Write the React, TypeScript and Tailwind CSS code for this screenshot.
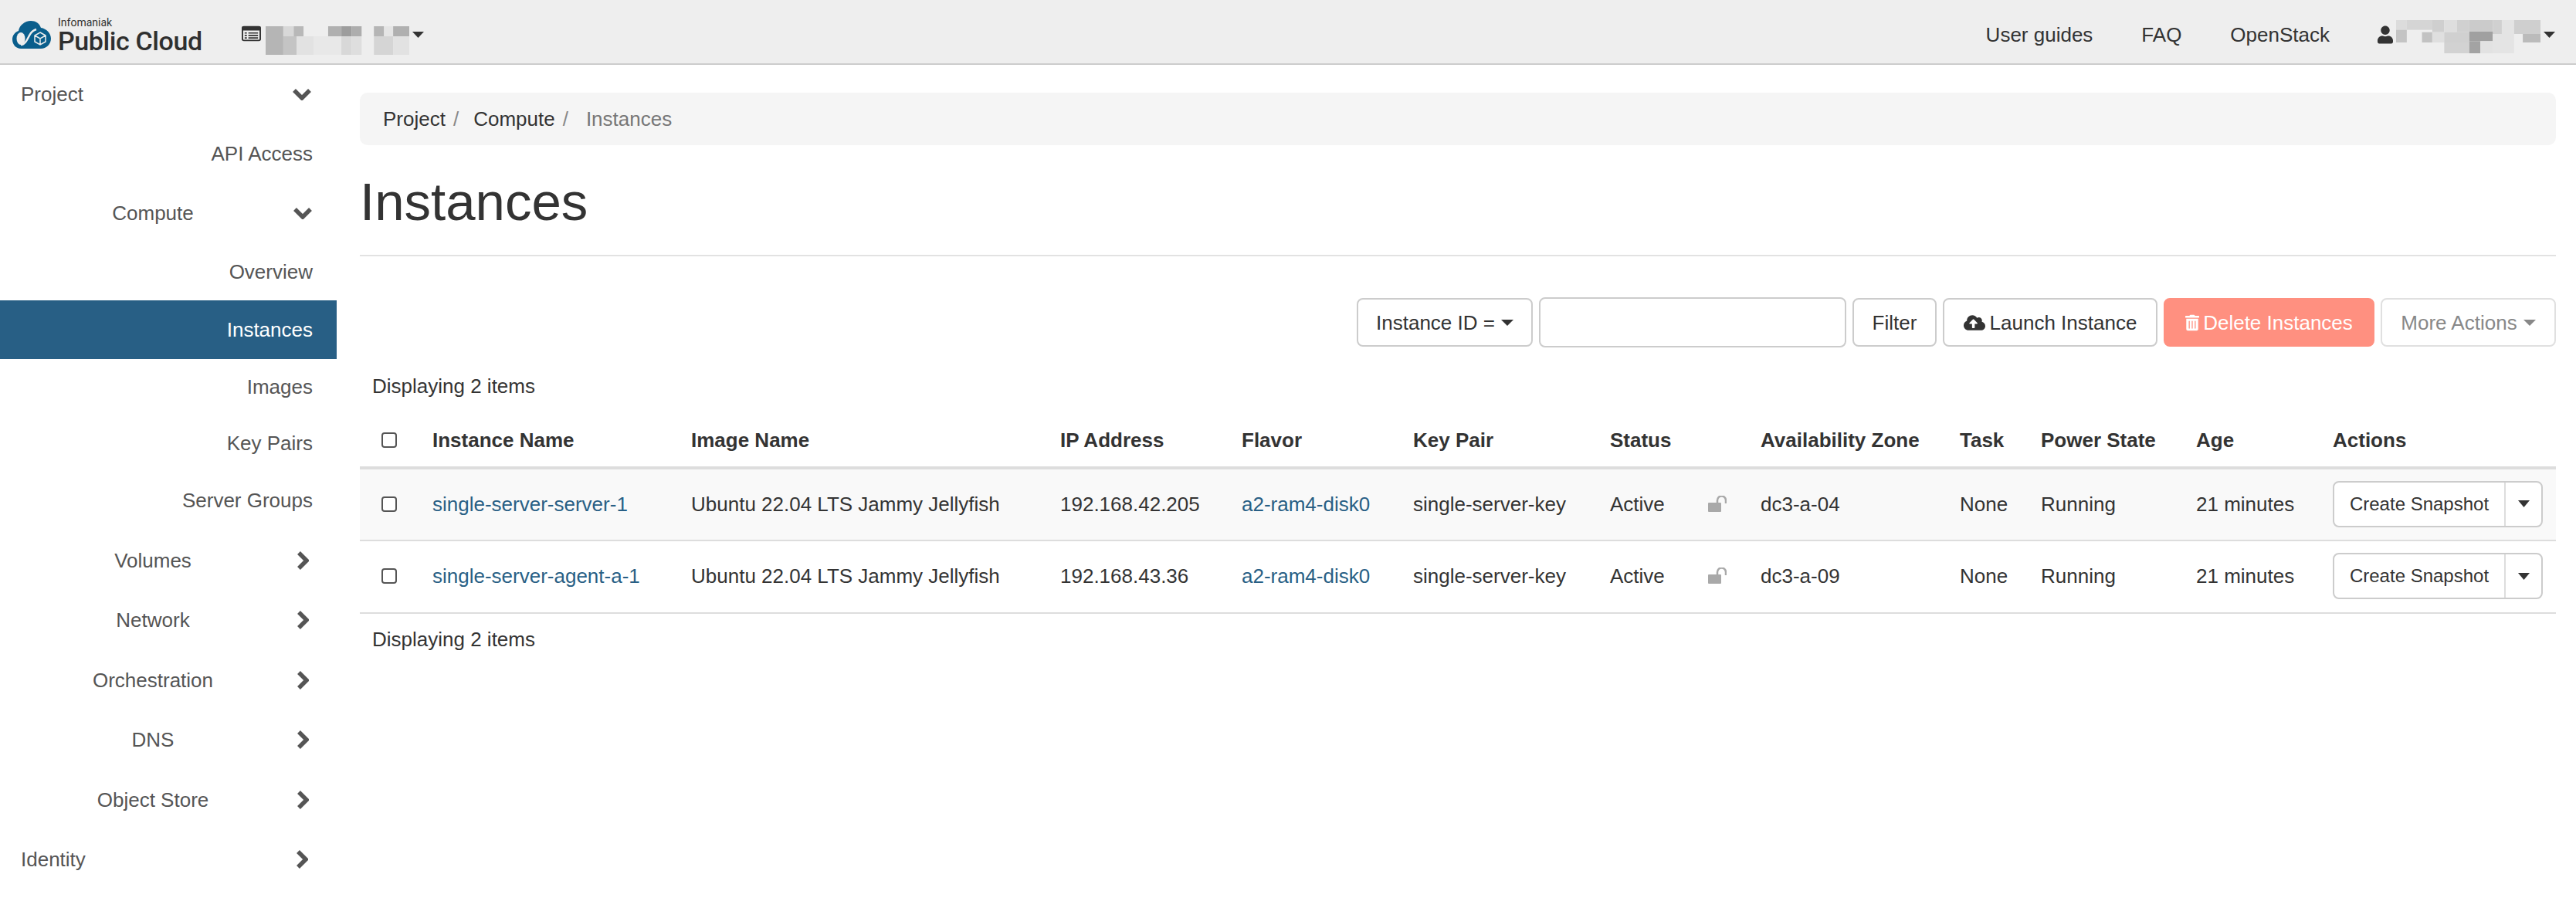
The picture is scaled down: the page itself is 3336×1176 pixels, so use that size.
import React from "react";
import { FaCloudUploadAlt, FaTrashAlt, FaUser } from "react-icons/fa";

const headerMosaic: [number, number, number, number, string][] = [
  [843, 102, 56, 39, "#b5b5b5"], [899, 102, 33, 39, "#d8d8d8"], [932, 102, 31, 39, "#b8b8b8"],
  [1041, 102, 42, 39, "#b0b0b0"], [1083, 102, 32, 39, "#9d9d9d"], [1115, 102, 32, 39, "#adadad"],
  [1186, 102, 32, 39, "#b5b5b5"], [1218, 102, 29, 39, "#e5e5e5"], [1247, 102, 51, 39, "#b0b0b0"],
  [843, 141, 56, 72, "#b5b5b5"], [899, 141, 42, 72, "#c4c4c4"], [941, 141, 54, 72, "#e2e2e2"],
  [995, 141, 88, 72, "#e8e8e8"], [1083, 141, 32, 72, "#d8d8d8"], [1115, 141, 32, 72, "#dedede"],
  [1186, 141, 61, 72, "#d5d5d5"], [1247, 141, 51, 72, "#e2e2e2"],
];

const userMosaic: [number, number, number, number, string][] = [
  [1127, 78, 26, 38, "#dcdcdc"], [1153, 78, 62, 38, "#d5d5d5"], [1215, 78, 29, 47, "#cfcfcf"],
  [1244, 78, 31, 47, "#dedede"], [1275, 78, 30, 47, "#d0d0d0"], [1305, 78, 57, 45, "#cbcbcb"],
  [1362, 78, 22, 54, "#d0d0d0"], [1384, 78, 30, 54, "#e4e4e4"], [1414, 78, 64, 54, "#cfcfcf"],
  [1127, 116, 26, 49, "#c4c4c4"], [1190, 125, 25, 40, "#c2c2c2"], [1215, 125, 29, 40, "#dfdfdf"],
  [1244, 125, 61, 40, "#d0d0d0"], [1305, 123, 57, 37, "#a0a0a0"], [1362, 132, 52, 33, "#e4e4e4"],
  [1435, 132, 43, 33, "#bbbbbb"], [1244, 165, 61, 42, "#d2d2d2"], [1305, 160, 27, 47, "#a3a3a3"],
  [1332, 160, 30, 47, "#e2e2e2"], [1362, 165, 52, 42, "#e4e4e4"],
];

function Mosaic({ viewBox, rects, className }: { viewBox: string; rects: [number, number, number, number, string][]; className: string }) {
  return (
    <svg viewBox={viewBox} preserveAspectRatio="none" className={className}>
      {rects.map(([x, y, w, h, fill], i) => (
        <rect key={i} x={x} y={y} width={w} height={h} fill={fill} />
      ))}
    </svg>
  );
}

function Caret({ className = "" }: { className?: string }) {
  return (
    <svg viewBox="0 0 14 8" preserveAspectRatio="none" className={`shrink-0 fill-current ${className}`}>
      <path d="M0 0H14L7 8Z" />
    </svg>
  );
}

function ChevronDown() {
  return (
    <svg viewBox="0 0 24 16" className="w-6 h-4 shrink-0 ml-1 text-[#555]" fill="none" stroke="currentColor" strokeWidth="5.500">
      <path d="M2 3L12 13L22 3" />
    </svg>
  );
}

function ChevronRight() {
  return (
    <span className="w-6 ml-1 flex justify-center shrink-0">
      <svg viewBox="0 0 16 24" className="w-4 h-6 text-[#555]" fill="none" stroke="currentColor" strokeWidth="5.500">
        <path d="M3 2L13 12L3 22" />
      </svg>
    </span>
  );
}

function Checkbox() {
  return <span className="block w-5 h-5 border-2 border-[#555] rounded-[4px] bg-white" />;
}

function UnlockIcon() {
  return (
    <svg viewBox="0 0 24 22" className="w-6 h-[22px] text-[#a9a9a9]" fill="currentColor">
      <rect x="0" y="9" width="17" height="12" rx="1" />
      <path d="M12 9V6a5.500 5.500 0 0 1 11 0v4" fill="none" stroke="currentColor" strokeWidth="2.500" />
    </svg>
  );
}

function LogoCloud() {
  return (
    <svg viewBox="0 0 50 36" className="w-[50px] h-9 shrink-0">
      <path d="M11 36C5 36 0 31 0 24c0-5 3-9 8-11C9 6 16 0 24 0c6 0 11 3 13 9 7 1 13 7 13 14 0 7-6 13-13 13Z" fill="#0a5e8c" />
      <ellipse cx="11" cy="23" rx="5.500" ry="8" fill="#eeeeee" />
      <path d="M11 31c5 0 8-6 11-12 2-4 5-7 9-8" fill="none" stroke="#eeeeee" strokeWidth="2.500" />
      <path d="M36 15l7 4v8l-7 4-7-4v-8ZM29 19l7 4 7-4M36 23v8" fill="none" stroke="#eeeeee" strokeWidth="1.500" />
    </svg>
  );
}

function TopLevel({ label, open, className = "h-[77.5px]" }: { label: string; open?: boolean; className?: string }) {
  return (
    <div className={`flex items-center pl-[27px] pr-[33px] justify-between ${className}`}>
      <span>{label}</span>
      {open ? <ChevronDown /> : <ChevronRight />}
    </div>
  );
}

function Group({ label, open, className = "h-[77.5px]" }: { label: string; open?: boolean; className?: string }) {
  return (
    <div className={`flex items-center pl-5 ${className}`}>
      <span className="w-[356px] text-center">{label}</span>
      {open ? <ChevronDown /> : <ChevronRight />}
    </div>
  );
}

function Leaf({ label, className = "h-[74px]" }: { label: string; className?: string }) {
  return (
    <div className={`flex items-center justify-end pr-[31px] ${className}`}>
      {label}
    </div>
  );
}

function ToolButton({ children, className = "" }: { children: React.ReactNode; className?: string }) {
  return (
    <button type="button" className={`h-[63px] flex items-center justify-center border-2 rounded-[8px] ${className}`}>
      {children}
    </button>
  );
}

const rows = [
  { name: "single-server-server-1", ip: "192.168.42.205", zone: "dc3-a-04", striped: true },
  { name: "single-server-agent-a-1", ip: "192.168.43.36", zone: "dc3-a-09", striped: false },
];

const headers = ["Instance Name", "Image Name", "IP Address", "Flavor", "Key Pair", "Status", "Availability Zone", "Task", "Power State", "Age", "Actions"];
const colWidths = ["w-[78px]", "w-[335px]", "w-[478px]", "w-[235px]", "w-[222px]", "w-[255px]", "w-[195px]", "w-[258px]", "w-[105px]", "w-[201px]", "w-[177px]", "w-[305px]"];

export default function App() {
  return (
    <div className="w-[3336px] h-[1176px] overflow-hidden bg-white text-[26px] leading-[36px] text-[#333] font-['Liberation_Sans',sans-serif]">
      {/* Top bar */}
      <header className="h-[84px] bg-[#eeeeee] border-b-2 border-[#cccccc] flex items-center">
        <div className="flex items-center ml-4 w-[297px] shrink-0 gap-[9px] mt-2">
          <LogoCloud />
          <div className="flex flex-col font-['Roboto',sans-serif]">
            <span className="text-[14px] leading-[14px] mb-[2px]">Infomaniak</span>
            <span className="text-[34px] leading-[30px] font-medium tracking-[-0.4px] text-[#2f2f2f]">Public Cloud</span>
          </div>
        </div>
        <svg viewBox="0 0 26 26" preserveAspectRatio="none" className="w-[25px] h-[21px] mt-[5px] text-[#333]" fill="currentColor">
          <path fillRule="evenodd" d="M3 1h20a3 3 0 0 1 3 3v18a3 3 0 0 1-3 3H3a3 3 0 0 1-3-3V4a3 3 0 0 1 3-3Zm-1 7v14a1 1 0 0 0 1 1h20a1 1 0 0 0 1-1V8Z" />
          <path d="M4 11h3v2H4ZM9 11h13v2H9ZM4 15h3v2H4ZM9 15h13v2H9ZM4 19h3v2H4ZM9 19h13v2H9Z" />
        </svg>
        <Mosaic viewBox="843 102 455 111" rects={headerMosaic} className="w-[186px] h-[37px] shrink-0 ml-[6px] mt-[23px]" />
        <Caret className="w-[15px] h-2 ml-1 mt-2 text-[#333]" />
        <nav className="ml-auto flex items-center pr-[27px] mt-2">
          <span>User guides</span>
          <span className="ml-[63px]">FAQ</span>
          <span className="ml-[63px]">OpenStack</span>
          <FaUser className="ml-[62px] w-5 h-6 text-[#333]" />
          <Mosaic viewBox="1127 78 351 129" rects={userMosaic} className="w-[187px] h-[43px] shrink-0 ml-1 mt-1" />
          <Caret className="w-[15px] h-2 ml-1 text-[#333]" />
        </nav>
      </header>

      <div className="flex">
        {/* Sidebar */}
        <aside className="w-[436px] shrink-0 text-[#555]">
          <TopLevel label="Project" open className="h-[76px] mb-[2px]" />
          <Leaf label="API Access" />
          <Group label="Compute" open className="h-[79px]" />
          <Leaf label="Overview" />
          <Leaf label="Instances" className="h-[76px] bg-[#285f85] text-white" />
          <Leaf label="Images" className="h-[72px]" />
          <Leaf label="Key Pairs" />
          <Leaf label="Server Groups" />
          <Group label="Volumes" className="h-[77.5px] mt-[2px]" />
          <Group label="Network" />
          <Group label="Orchestration" />
          <Group label="DNS" />
          <Group label="Object Store" />
          <TopLevel label="Identity" />
        </aside>

        {/* Main */}
        <main className="flex-1 pl-[30px] pr-[26px] pt-9">
          <div className="h-[68px] bg-[#f5f5f5] rounded-[10px] flex items-center px-[30px]">
            <span>Project</span>
            <span className="text-[#888] ml-[10px]">/</span>
            <span className="ml-[19px]">Compute</span>
            <span className="text-[#888] ml-[10px]">/</span>
            <span className="ml-[23px] text-[#777]">Instances</span>
          </div>

          <div className="h-[144px] border-b-2 border-[#e2e2e2] flex items-center">
            <h1 className="text-[69px] leading-[74px] mt-[5px] font-normal">Instances</h1>
          </div>

          {/* Table actions */}
          <div className="mt-[53px] flex justify-end items-center">
            <ToolButton className="w-[228px] bg-white border-[#ccc]">
              Instance ID =<Caret className="w-4 h-2 ml-2 text-[#333]" />
            </ToolButton>
            <input className="w-[398px] h-[65px] ml-2 border-2 border-[#ccc] rounded-[8px] bg-white" />
            <ToolButton className="w-[109px] ml-2 bg-white border-[#ccc]">Filter</ToolButton>
            <ToolButton className="w-[278px] ml-2 bg-white border-[#ccc]">
              <FaCloudUploadAlt className="w-[28px] h-[26px] mr-[6px]" />Launch Instance
            </ToolButton>
            <ToolButton className="w-[273px] ml-2 bg-[#ff9080] border-[#ff9080] text-white">
              <FaTrashAlt className="w-[18px] h-[22px] mr-[5px]" />Delete Instances
            </ToolButton>
            <ToolButton className="w-[227px] ml-2 bg-white border-[#e0e0e0] text-[#888]">
              More Actions<Caret className="w-4 h-2 ml-2 text-[#888]" />
            </ToolButton>
          </div>

          <div className="mt-[32px] pl-4">Displaying 2 items</div>

          <table className="table-fixed w-[2844px] mt-[11px] border-collapse">
            <colgroup>
              {colWidths.map((w) => (
                <col key={w} className={w} />
              ))}
            </colgroup>
            <thead>
              <tr className="h-[77px] border-b-4 border-[#dddddd]">
                <th className="pl-[28px] pt-[6px]"><Checkbox /></th>
                {headers.map((h) => (
                  <th key={h} className="pl-4 pt-[6px] text-left font-bold">{h}</th>
                ))}
              </tr>
            </thead>
            <tbody>
              {rows.map((row) => (
                <tr key={row.name} className={`h-[94px] border-b-2 border-[#dddddd] [&>td]:pb-[2px] ${row.striped ? "bg-[#f9f9f9]" : ""}`}>
                  <td className="pl-[28px]"><Checkbox /></td>
                  <td className="pl-4 text-[#285f85]">{row.name}</td>
                  <td className="pl-4">Ubuntu 22.04 LTS Jammy Jellyfish</td>
                  <td className="pl-4">{row.ip}</td>
                  <td className="pl-4 text-[#285f85]">a2-ram4-disk0</td>
                  <td className="pl-4">single-server-key</td>
                  <td className="pl-4">
                    <div className="flex items-center">
                      <span className="w-[127px]">Active</span>
                      <UnlockIcon />
                    </div>
                  </td>
                  <td className="pl-4">{row.zone}</td>
                  <td className="pl-4">None</td>
                  <td className="pl-4">Running</td>
                  <td className="pl-4">21 minutes</td>
                  <td className="pl-4">
                    <div className="flex w-[272px] h-[60px] border-2 border-[#ccc] rounded-[8px] bg-white text-[24px]">
                      <span className="w-[222px] flex items-center justify-center border-r-2 border-[#ddd]">Create Snapshot</span>
                      <span className="flex-1 flex items-center justify-center">
                        <Caret className="w-[15px] h-[9px] text-[#333]" />
                      </span>
                    </div>
                  </td>
                </tr>
              ))}
            </tbody>
          </table>

          <div className="mt-[15px] pl-4">Displaying 2 items</div>
        </main>
      </div>
    </div>
  );
}
